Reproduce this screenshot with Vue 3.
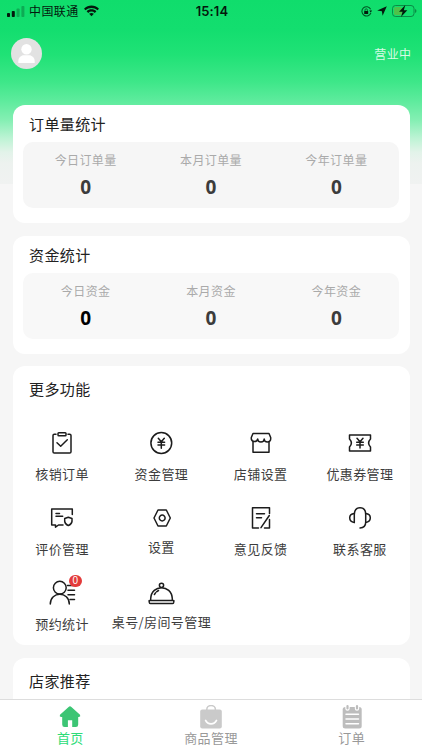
<template>
  <div class="page">
    <header class="top">
      <div class="status">
        <div class="status-left">
          <svg class="signal" width="18" height="12" viewBox="0 0 18 12">
            <rect x="0" y="8" width="3" height="4" rx="0.8" />
            <rect x="4.8" y="6" width="3" height="6" rx="0.8" />
            <rect x="9.6" y="3.4" width="3" height="8.6" rx="0.8" opacity="0.25" />
            <rect x="14.4" y="1" width="3" height="11" rx="0.8" opacity="0.25" />
          </svg>
          <span class="carrier">中国联通</span>
          <svg class="wifi" width="15" height="12" viewBox="0 0 16 12">
            <path d="M0 3.5C4.6-.9 11.4-.9 16 3.5L14.3 5.3C10.8 2 5.2 2 1.7 5.3Z" />
            <path d="M2.8 6.3C5.8 3.5 10.2 3.5 13.2 6.3L11.5 8C9.5 6.1 6.5 6.1 4.5 8Z" />
            <path d="M5.5 9C7 7.7 9 7.7 10.5 9L8 11.6Z" />
          </svg>
        </div>
        <span class="time">15:14</span>
        <div class="status-right">
          <svg width="11" height="11" viewBox="0 0 11 11">
            <path d="M9.6 3.2A4.6 4.6 0 1 0 9.9 6.8" fill="none" stroke="#052" stroke-width="1.1" />
            <path d="M8.3 4.6H11L9.8 6.6Z" />
            <rect x="3.2" y="4.9" width="4" height="3" rx="0.5" />
            <path d="M4 5V4a1.2 1.2 0 0 1 2.4 0V5" fill="none" stroke="#052" stroke-width="0.8" />
          </svg>
          <svg class="arrow" width="10" height="10" viewBox="0 0 10 10">
            <path d="M9.8.2L5.6 9.8 4.9 5.2.2 4.5Z" />
          </svg>
          <svg class="battery" width="25" height="12" viewBox="0 0 25 12">
            <rect x="0.5" y="0.5" width="21.5" height="11" rx="3" fill="none" stroke="#076a36" stroke-opacity="0.7" />
            <rect x="2" y="2" width="8" height="8" rx="1.6" fill="#4fc14a" />
            <path d="M23.2 4v4c1.6-.6 1.6-3.4 0-4Z" opacity="0.5" />
            <path d="M13.3 0L7 6.8h3.6L9 12l6.3-6.8h-3.5Z" />
          </svg>
        </div>
      </div>
      <div class="user">
        <svg width="31" height="31" viewBox="0 0 31 31">
          <circle cx="15.5" cy="15.5" r="15.5" fill="#e2e2e2" />
          <circle cx="15.5" cy="11.2" r="5.2" fill="#fff" />
          <path d="M7.3 25v-1.6C7.3 19.6 10 17.3 13 17.3h5c3 0 5.7 2.3 5.7 6.1V25Z" fill="#fff" />
        </svg>
        <span class="state">营业中</span>
      </div>
    </header>

    <main class="content">
      <section v-for="card in stats" :key="card.title" class="card stat-card">
        <h3>{{ card.title }}</h3>
        <div class="stat-box" :class="{ light: card.light }">
          <div v-for="item in card.items" :key="item.label" class="stat">
            <span class="stat-label">{{ item.label }}</span>
            <b :class="{ dark: item.dark }">{{ item.value }}</b>
          </div>
        </div>
      </section>

      <section class="card more">
        <h3>更多功能</h3>
        <div class="grid">
          <div v-for="fn in functions" :key="fn.name" class="fn" :class="{ high: fn.high }">
            <div class="fn-icon">
              <svg width="28" height="28" viewBox="0 0 28 28">
                <path v-for="(d, i) in fn.paths" :key="i" :d="d" />
              </svg>
              <i v-if="fn.badge !== undefined" class="badge">{{ fn.badge }}</i>
            </div>
            <span>{{ fn.name }}</span>
          </div>
        </div>
      </section>

      <section class="card recommend">
        <h3>店家推荐</h3>
      </section>
    </main>

    <nav class="tabbar">
      <div class="tab" :class="{ active: tab === 0 }" @click="tab = 0">
        <svg width="24" height="24" viewBox="0 0 24 24">
          <path d="M10.6 1.9Q12 .7 13.4 1.9L22 9.7Q23 11.5 21 12H20.2V19.5Q20.2 22 17.8 22H14.2V15.2H9.9V22H6.6Q4.2 22 4.2 19.5V12H3Q1 11.5 2 9.7Z" fill="#3cc574" />
        </svg>
        <span>首页</span>
      </div>
      <div class="tab" :class="{ active: tab === 1 }" @click="tab = 1">
        <svg width="24" height="24" viewBox="0 0 24 24">
          <path d="M7.8 6V4.500a4.300 4 0 0 1 8.600 0V6" fill="none" stroke="#cacaca" stroke-width="1.500" />
          <rect x="1.200" y="4.600" width="21.600" height="19" rx="2" fill="#cacaca" />
          <path d="M6.600 15.400C8.800 20 15.200 20 17.500 15.400" fill="none" stroke="#fff" stroke-width="1.700" stroke-linecap="round" />
        </svg>
        <span>商品管理</span>
      </div>
      <div class="tab" :class="{ active: tab === 2 }" @click="tab = 2">
        <svg width="24" height="24" viewBox="0 0 24 24">
          <rect x="2.700" y="2" width="19" height="21.600" rx="2.500" fill="#bdbdbd" />
          <path d="M7.500 1V3.500M17 1V3.500" stroke="#fff" stroke-width="4.400" stroke-linecap="round" />
          <path d="M7.500 1.100V3.400M17 1.100V3.400" stroke="#bdbdbd" stroke-width="2.200" stroke-linecap="round" />
          <path d="M6 9.200H18.500M6 14H18.500M6 18.800H18.500" stroke="#fff" stroke-width="1.500" stroke-linecap="round" />
        </svg>
        <span>订单</span>
      </div>
    </nav>
  </div>
</template>

<script setup>
import { ref } from 'vue'

const tab = ref(0)

const stats = ref([
  {
    title: '订单量统计',
    items: [
      { label: '今日订单量', value: 0 },
      { label: '本月订单量', value: 0 },
      { label: '今年订单量', value: 0 }
    ]
  },
  {
    title: '资金统计',
    light: true,
    items: [
      { label: '今日资金', value: 0, dark: true },
      { label: '本月资金', value: 0 },
      { label: '今年资金', value: 0 }
    ]
  }
])

// 图标路径，画布 28x28
const functions = [
  {
    name: '核销订单',
    paths: [
      'M8 5.300H6.300Q5 5.300 5 6.600V22.700Q5 24 6.300 24H21.700Q23 24 23 22.700V6.600Q23 5.300 21.700 5.300H20',
      'M10.800 3.800H17.200Q18 3.800 18 4.600V5.900Q18 6.700 17.200 6.700H10.800Q10 6.700 10 5.900V4.600Q10 3.800 10.800 3.800Z',
      'M9 13.700L12.700 17.300L19.300 10.800'
    ]
  },
  {
    name: '资金管理',
    paths: [
      'M14.300 3.600A10.400 10.400 0 1 1 14.300 24.400A10.400 10.400 0 1 1 14.300 3.600Z',
      'M11.300 9.200L14.300 12.700L17.300 9.200M14.300 12.700V19.300M11 13.200H17.600M11 16H17.600'
    ]
  },
  {
    name: '店铺设置',
    paths: [
      'M6 4.500H22L23.700 8.500V10A3.250 3 0 0 1 17.200 10A3.250 3 0 0 1 10.700 10A3.250 3 0 0 1 4.300 10V8.500Z',
      'M6 13V23.200H22V13'
    ]
  },
  {
    name: '优惠券管理',
    paths: [
      'M3.500 6H24.500V10Q20.700 14 24.500 18V22H3.500V18Q7.300 14 3.500 10Z',
      'M11 9.300L14 12.800L17 9.300M14 12.800V19M10.700 13.300H17.300M10.700 16H17.300'
    ]
  },
  {
    name: '评价管理',
    paths: [
      'M24.300 10.500V5H3.700V21H7.500V23.200L10.500 21H15',
      'M8 9.500H11.500M8 12.300H14.700',
      'M20.300 13.200L24 14.500V17.300Q23.700 20 20.300 21.600Q17 20 16.700 17.300V14.500Z'
    ]
  },
  {
    name: '设置',
    high: true,
    paths: [
      'M11 6H19.300L23.300 14L19.300 22H11L7 14Z',
      'M15.200 11.100A2.900 2.900 0 1 1 15.200 16.900A2.900 2.900 0 1 1 15.200 11.100Z'
    ]
  },
  {
    name: '意见反馈',
    paths: [
      'M22.500 9.500V3.800H5.500V24H11.500M22.500 15.500V24H17.500',
      'M9.500 9.700H17.500M9.500 13.800H14.500M22.300 11.500L14 23.700'
    ]
  },
  {
    name: '联系客服',
    paths: [
      'M8.300 18.500V10.500Q8.600 3.800 14 3.800Q19.700 3.800 19.700 10.500V18C19.700 21.500 18 23.900 14 23.900',
      'M8.300 9.500Q3.700 10 3.700 13.800Q3.700 17.800 8.300 18.500M19.700 9.500Q24.300 10 24.300 13.800Q24.300 17.800 19.700 18.500'
    ]
  },
  {
    name: '预约统计',
    badge: 0,
    paths: [
      'M11.800 2.300A6.400 6.400 0 1 1 11.800 15.100A6.400 6.400 0 1 1 11.800 2.300Z',
      'M2.300 25C2.300 12 21.300 12 21.300 25',
      'M19.500 6.500H26.500M20 11.300H26.500M20 15.700H26.500M22 20.500H26.500'
    ]
  },
  {
    name: '桌号/房间号管理',
    high: true,
    paths: [
      'M14.500 4.200A2.100 2.100 0 1 1 14.500 8.400A2.100 2.100 0 1 1 14.500 4.200Z',
      'M3.700 21.300V19.500C4.500 5 24.500 5 25.300 19.500V21.300',
      'M2.800 21.400H26.200Q27 21.400 26.900 22.200L26.600 23.700Q26.400 24.500 25.500 24.500H3.500Q2.600 24.500 2.400 23.700L2.100 22.200Q2 21.400 2.800 21.400Z',
      'M7.400 15.500L8.500 13.800M9.500 12.800L11.500 11.500'
    ]
  }
]
</script>

<style>
body {
  background: #f6f6f6;
}
</style>

<style scoped>
.page {
  height: 750px;
  display: flex;
  flex-direction: column;
  overflow: hidden;
  color: #333;
  font-family: "Noto Sans CJK SC", sans-serif;
  letter-spacing: 0.4px;
  background: linear-gradient(
    #10dd6c 0,
    #13de6f 30px,
    #20e276 55px,
    #3ee789 82px,
    #5ceb9c 100px,
    #84efb3 120px,
    #bcf3d4 138px,
    #e2f3e9 152px,
    #edf2ef 163px,
    #f0f2f1 184px,
    #f6f6f6 184px
  );
}

.top {
  height: 105px;
  flex: none;
}

.status {
  height: 22px;
  display: grid;
  grid-template-columns: 1fr auto 1fr;
  align-items: center;
  padding: 0 5px 0 7px;
  color: #04190d;
  fill: #04190d;
}

.status-left,
.status-right {
  display: flex;
  align-items: center;
}

.status-right {
  justify-content: flex-end;
}

.carrier {
  margin: 0 5px 0 4px;
  font-size: 12px;
  line-height: 22px;
}

.time {
  font-family: Inter, sans-serif;
  font-size: 13px;
  font-weight: 600;
  letter-spacing: 0.1px;
}

.arrow {
  margin: 0 5px 0 5px;
}

.user {
  display: flex;
  align-items: center;
  justify-content: space-between;
  height: 31px;
  margin-top: 16px;
  padding: 0 10.5px;
}

.state {
  color: #d8fbe6;
  font-size: 12px;
}

.content {
  flex: 1;
  min-height: 0;
  padding: 0 12.5px;
  display: flex;
  flex-direction: column;
  gap: 12.5px;
}

.card {
  flex: none;
  background: #fff;
  border-radius: 12px;
}

h3 {
  margin: 0;
  padding: 8px 0 0 16.5px;
  font-size: 15px;
  font-weight: 400;
  line-height: 22px;
  color: #222;
}

.stat-card {
  height: 118px;
}

.stat-box {
  display: flex;
  margin: 7px 10.5px 0;
  height: 66px;
  border-radius: 10px;
  background: #f6f6f6;
}

.stat-box.light {
  background: #f8f8f8;
}

.stat {
  flex: 1;
  display: flex;
  flex-direction: column;
  align-items: center;
}

.stat-label {
  margin-top: 8px;
  color: #aaa;
  font-size: 12px;
  line-height: 20px;
}

.stat b {
  margin-top: 5px;
  font-family: "Noto Sans", sans-serif;
  font-size: 19px;
  line-height: 24px;
  letter-spacing: 0;
  color: #3c3c3c;
}

.stat b.dark {
  color: #000;
}

.more {
  height: 279px;
}

.more h3,
.recommend h3 {
  padding-top: 12px;
}

.recommend {
  height: 160px;
}

.grid {
  display: grid;
  grid-template-columns: repeat(4, 1fr);
  grid-auto-rows: 75px;
  margin-top: 29px;
}

.fn {
  display: flex;
  flex-direction: column;
  align-items: center;
  color: #3c3c3c;
  font-size: 13px;
  line-height: 20px;
  white-space: nowrap;
}

.fn-icon {
  position: relative;
  height: 28px;
  margin-bottom: 6.5px;
}

.fn-icon svg {
  display: block;
  fill: none;
  stroke: #1c1c1c;
  stroke-width: 1.5;
  stroke-linejoin: round;
  stroke-linecap: round;
}

.fn.high .fn-icon {
  margin-bottom: 5px;
}

.badge {
  position: absolute;
  top: -4.5px;
  right: -5.5px;
  width: 12.5px;
  height: 12.5px;
  border-radius: 50%;
  background: #e33b3b;
  color: #fff;
  font-family: "Liberation Sans", sans-serif;
  font-size: 10px;
  font-style: normal;
  line-height: 12.5px;
  letter-spacing: 0;
  text-align: center;
}

.tabbar {
  flex: none;
  height: 50px;
  display: flex;
  border-top: 1px solid #ddd;
  background: #fff;
}

.tab {
  flex: 1;
  display: flex;
  flex-direction: column;
  align-items: center;
  padding-top: 5px;
  color: #999;
  font-size: 13px;
  line-height: 18px;
}

.tab.active {
  color: #2ddc78;
}
</style>
